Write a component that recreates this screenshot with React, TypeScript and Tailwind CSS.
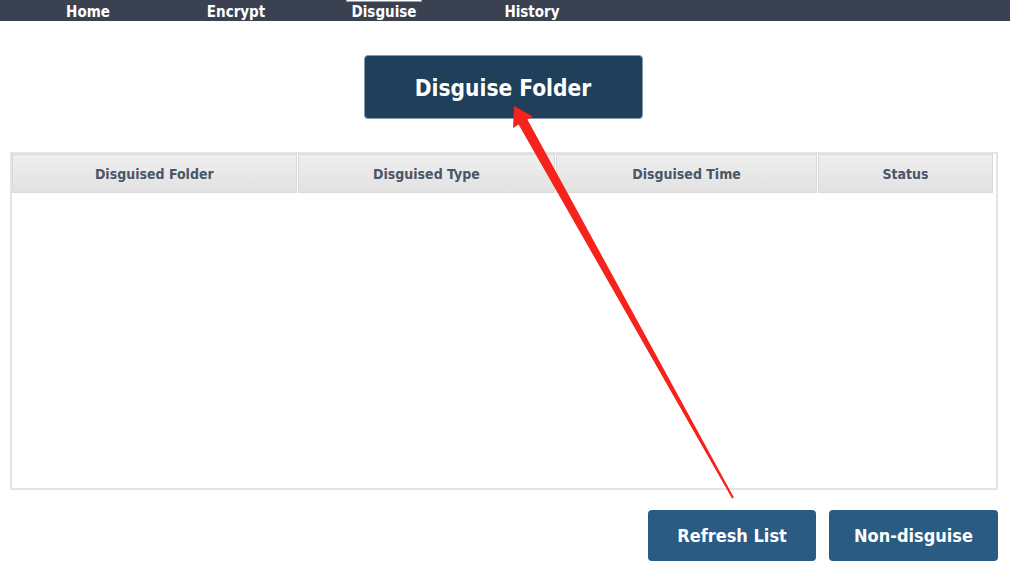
import React from "react";

const NAV_ITEMS = ["Home", "Encrypt", "Disguise", "History"];

const COLUMNS = [
  { label: "Disguised Folder", width: "w-[286px]" },
  { label: "Disguised Type", width: "w-[259px]" },
  { label: "Disguised Time", width: "w-[262px]" },
  { label: "Status", width: "w-[176px]" },
];

const font = { fontFamily: '"DejaVu Sans Condensed", "DejaVu Sans", Tahoma, sans-serif' };

/** Red annotation arrow drawn over the screenshot. */
function Arrow() {
  return (
    <svg className="pointer-events-none absolute left-0 top-0" width="1010" height="568">
      <polygon
        points="514,106 533,116.5 527.4,119.5 733.9,497.5 732.1,498.5 518.6,124.5 513,128"
        fill="#f5231c"
      />
    </svg>
  );
}

export default function App() {
  return (
    <div className="relative h-[568px] w-[1010px] overflow-hidden bg-white" style={font}>
      <nav className="relative flex h-[21px] bg-[#3a4252] pl-[14px]">
        {NAV_ITEMS.map((item) => (
          <div
            key={item}
            className="relative flex w-[148px] items-end justify-center pb-[1px] text-[15px] font-bold leading-none text-white"
          >
            {item === "Disguise" && (
              <span className="absolute left-[36px] top-0 h-[2px] w-[76px] border border-t-0 border-[#9aa0a8] bg-white" />
            )}
            {item}
          </div>
        ))}
      </nav>

      <div className="flex justify-center pr-[4px] pt-[34px]">
        <button
          type="button"
          className="h-[64px] w-[279px] rounded-[4px] border border-[#8899aa] bg-[#1f3f5b] pt-[3px] text-[22.5px] font-bold text-white"
        >
          Disguise Folder
        </button>
      </div>

      <div className="ml-[10px] mt-[33px] h-[338px] w-[988px] border-2 border-[#e4e4e4] pr-[2px]">
        <div className="flex">
          {COLUMNS.map((col) => (
            <div
              key={col.label}
              className={`${col.width} mr-[1px] flex h-[39px] items-center justify-center border border-[#d9d9d9] bg-gradient-to-b from-[#efefef] to-[#e2e2e2] pt-[2px] text-[14px] font-bold text-[#4b5666]`}
            >
              {col.label}
            </div>
          ))}
        </div>
      </div>

      <div className="mt-[20px] flex justify-end gap-[13px] pr-[12px]">
        <button
          type="button"
          className="h-[51px] w-[168px] rounded-[4px] bg-[#2a5b82] text-[18px] font-bold text-white"
        >
          Refresh List
        </button>
        <button
          type="button"
          className="h-[51px] w-[169px] rounded-[4px] bg-[#2a5b82] text-[18px] font-bold text-white"
        >
          Non-disguise
        </button>
      </div>

      <Arrow />
    </div>
  );
}
